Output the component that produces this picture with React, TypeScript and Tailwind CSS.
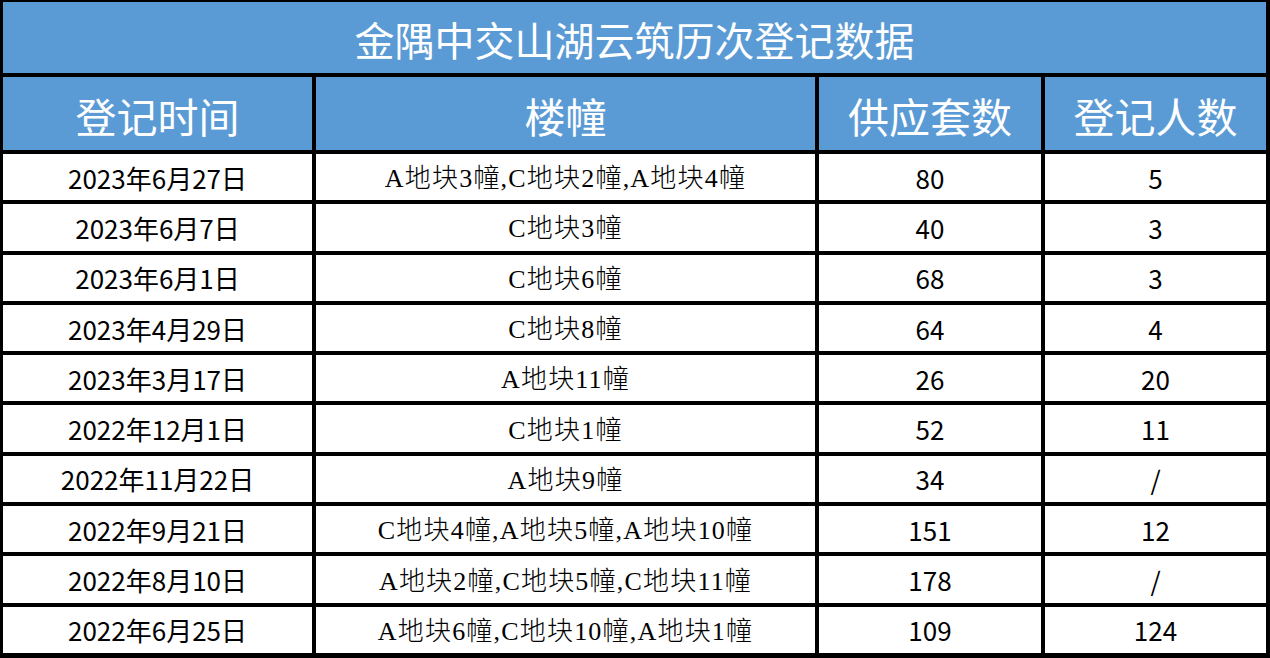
const ROWS: [string, string, string, string][] = [
  ["2023年6月27日", "A地块3幢,C地块2幢,A地块4幢", "80", "5"],
  ["2023年6月7日", "C地块3幢", "40", "3"],
  ["2023年6月1日", "C地块6幢", "68", "3"],
  ["2023年4月29日", "C地块8幢", "64", "4"],
  ["2023年3月17日", "A地块11幢", "26", "20"],
  ["2022年12月1日", "C地块1幢", "52", "11"],
  ["2022年11月22日", "A地块9幢", "34", "/"],
  ["2022年9月21日", "C地块4幢,A地块5幢,A地块10幢", "151", "12"],
  ["2022年8月10日", "A地块2幢,C地块5幢,C地块11幢", "178", "/"],
  ["2022年6月25日", "A地块6幢,C地块10幢,A地块1幢", "109", "124"],
];

const HEADERS = ["登记时间", "楼幢", "供应套数", "登记人数"];

const sans = "font-['Noto_Sans_CJK_SC','Noto_Sans',sans-serif]";
const cell = "flex items-center justify-center bg-white text-black";

export default function App() {
  return (
    <div className="w-[1270px] h-[658px] bg-black pl-[3px] pr-[4px] pt-[2px] pb-[5px]">
      <div className="grid h-full grid-cols-[309px_499px_222px_1fr] grid-rows-[71px_73px_repeat(10,1fr)] gap-[4px]">
        <div
          className={`col-span-4 flex items-center justify-center bg-[#5b9bd5] pt-[2px] text-[40px] text-white ${sans}`}
        >
          金隅中交山湖云筑历次登记数据
        </div>
        {HEADERS.map((h) => (
          <div
            key={h}
            className={`flex items-center justify-center bg-[#5b9bd5] pt-[4px] text-[41px] text-white ${sans}`}
          >
            {h}
          </div>
        ))}
        {ROWS.map(([date, building, supply, count]) => (
          <>
            <div key={date + "d"} className={`${cell} text-[26px] ${sans}`}>
              {date}
            </div>
            <div
              key={date + "b"}
              className={`${cell} pt-[3px] text-[26px] tracking-[1.2px] font-light font-['Liberation_Serif','Noto_Sans_CJK_SC',serif]`}
            >
              {building}
            </div>
            <div key={date + "s"} className={`${cell} text-[26px] ${sans}`}>
              {supply}
            </div>
            <div key={date + "c"} className={`${cell} text-[26px] ${sans}`}>
              {count}
            </div>
          </>
        ))}
      </div>
    </div>
  );
}
